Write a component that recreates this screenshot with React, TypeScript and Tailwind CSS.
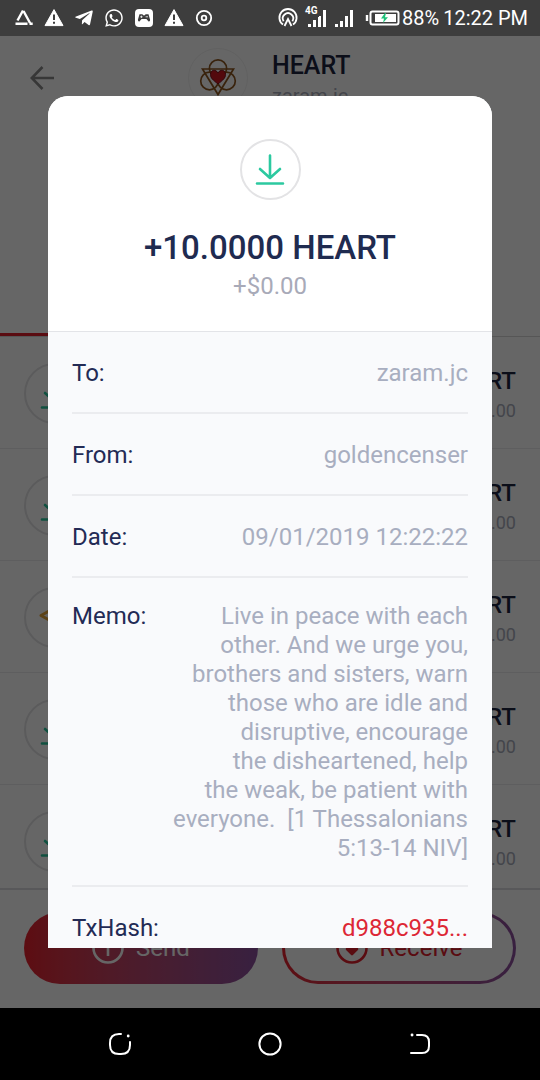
import type { ReactNode } from 'react';
import { FaTelegramPlane, FaWhatsapp } from 'react-icons/fa';

const transfers = [
  { id: 1, kind: 'in', amount: '+10.0000 HEART', usd: '+$0.00' },
  { id: 2, kind: 'in', amount: '+10.0000 HEART', usd: '+$0.00' },
  { id: 3, kind: 'swap', amount: '+10.0000 HEART', usd: '+$0.00' },
  { id: 4, kind: 'in', amount: '+10.0000 HEART', usd: '+$0.00' },
  { id: 5, kind: 'in', amount: '+10.0000 HEART', usd: '+$0.00' },
];

const memo = [
  'Live in peace with each',
  'other. And we urge you,',
  'brothers and sisters, warn',
  'those who are idle and',
  'disruptive, encourage',
  'the disheartened, help',
  'the weak, be patient with',
  'everyone.  [1 Thessalonians',
  '5:13-14 NIV]',
].join('\n');

function WarningIcon() {
  return (
    <svg viewBox="0 0 20 20" className="w-5 h-5">
      <path d="M10 1.6 19 17.6H1Z" fill="#fff" stroke="#fff" strokeLinejoin="round" />
      <path d="M10 6.5v5.5M10 13.8v2" stroke="#3d3d3d" strokeWidth="2" />
    </svg>
  );
}

function StatusBar() {
  return (
    <header className="flex h-9 shrink-0 items-center justify-between bg-[#3d3d3d] pl-[14px] pr-3 text-white">
      <div className="flex items-center gap-[10px]">
        <svg viewBox="0 0 20 20" className="w-5 h-5" fill="none" stroke="#fff" strokeWidth="2.4">
          <path d="M9 2.5 3.5 12.5M9.5 3l6.5 12M1.5 15.8h12M15.5 15.8h3.2" />
        </svg>
        <WarningIcon />
        <FaTelegramPlane className="w-5 h-5" />
        <FaWhatsapp className="w-5 h-5" />
        <svg viewBox="0 0 20 20" className="w-5 h-5">
          <rect x="1" y="1" width="18" height="18" rx="4" fill="#fff" />
          <path d="M5.5 6.2h3l.6 1h1.8l.6-1h3l1.6 5.6q0 2-1.5 1.6L12.4 11H7.6l-2.2 2.4Q4 13.8 3.9 11.8Z" fill="#3d3d3d" />
          <path d="M6.2 8.8h2.4M7.4 7.6V10M11.6 8.8H14" stroke="#fff" strokeWidth=".8" />
        </svg>
        <WarningIcon />
        <svg viewBox="0 0 20 20" className="w-5 h-5" fill="none" stroke="#fff">
          <circle cx="10" cy="10" r="7.2" strokeWidth="1.8" />
          <circle cx="10" cy="10" r="2.3" strokeWidth="1.8" />
        </svg>
      </div>
      <div className="flex items-center">
        <svg viewBox="0 0 20 20" className="w-5 h-5" fill="none" stroke="#fff" strokeWidth="1.8">
          <path d="M5 16.6A8.6 8.6 0 1 1 15 16.6" />
          <path d="M5.6 13.2A5.2 5.2 0 1 1 14.4 13.2" />
          <path d="m6.5 18 3.5-7 3.5 7" />
        </svg>
        <svg viewBox="0 0 54 24" className="ml-[6px] w-[54px] h-6" fill="#fff">
          <path d="M4 18h3v3H4zM9 14h3v7H9zM14 10h3v11h-3zM19 4h3v17h-3zM31 18h3v3h-3zM36 15h3v6h-3zM41 10h3v11h-3zM46 4h3v17h-3z" />
          <path d="M1 0h14v11H1z" fill="#3d3d3d" />
          <text x="1" y="8" className="font-bold text-[10px]">4G</text>
        </svg>
        <svg viewBox="0 0 36 20" className="ml-[7px] w-9 h-5" fill="none">
          <path d="M2 7v6" stroke="#fff" strokeWidth="2.4" />
          <rect x="5.5" y="3.5" width="28" height="13" rx="2" stroke="#fff" strokeWidth="2" />
          <path d="M10 6h21v8H10z" fill="#fff" />
          <path d="m20 5-4 5.6h3L18 15l5-5.8h-3L21 5Z" fill="#1fc27a" />
        </svg>
        <span className="ml-px text-[20px]">88%</span>
        <span className="ml-1 text-[20px]">12:22 PM</span>
      </div>
    </header>
  );
}

function TransferIcon({ kind }: { kind: string }) {
  return (
    <span className="flex w-[61px] h-[61px] shrink-0 items-center justify-center rounded-full border-2 border-[#e3e3e5] bg-white">
      {kind === 'in' ? (
        <svg viewBox="0 0 30 32" className="w-[30px] h-8" fill="none" stroke="#2cc9a0" strokeWidth="2.6" strokeLinecap="round" strokeLinejoin="round">
          <path d="M15 1.5v22M5 15l10 9 10-9M2 29.5h26" />
        </svg>
      ) : (
        <svg viewBox="0 0 32 32" className="w-8 h-8" fill="none" stroke="#e8a83c" strokeWidth="3" strokeLinejoin="round">
          <path d="m11 8.5-9 5 9 5M21 8.5l9 5-9 5" />
        </svg>
      )}
    </span>
  );
}

function TokenLogo() {
  return (
    <span className="flex w-[60px] h-[60px] items-center justify-center rounded-full border border-[#f2f2f2] bg-white">
      <svg viewBox="0 0 40 40" className="w-10 h-10" fill="none" stroke="#8f5720" strokeWidth="1.7">
        <circle cx="20" cy="10.5" r="8.6" />
        <circle cx="11.5" cy="23" r="8.8" />
        <circle cx="28.5" cy="23" r="8.8" />
        <path d="M4.500 11h31L20 36.5Z" />
        <path d="M20 26c-5-4-7.500-6-7.500-9.500 0-5 5.500-5.500 7.500-1.500 2-4 7.500-3.500 7.500 1.500 0 3.500-2.500 5.500-7.500 9.500Z" fill="#d01822" stroke="#7a1018" strokeWidth="1" />
      </svg>
    </span>
  );
}

function WalletScreen() {
  return (
    <div className="absolute inset-0 flex flex-col bg-white">
      <div className="flex h-[301px] shrink-0 flex-col justify-between border-b border-[#d6d6d8]">
        <div className="flex items-start pl-[30px] pt-3">
          <button aria-label="Back" className="mt-[18px]">
            <svg viewBox="0 0 24 24" className="w-6 h-6" fill="none" stroke="#8a8a8a" strokeWidth="2.6">
              <path d="M24 12H2M12.5 1 1.8 12l10.7 11" />
            </svg>
          </button>
          <div className="ml-[134px]">
            <TokenLogo />
          </div>
          <div className="ml-6 pt-1">
            <h1 className="text-[25px] leading-[28px] font-medium text-[#1c2340]">HEART</h1>
            <p className="mt-1 text-xl leading-6 text-[#a9adbb]">zaram.jc</p>
          </div>
        </div>
        <div className="h-[3px] w-1/2 bg-[#e0202c]" />
      </div>
      <ul className="min-h-0 flex-1 overflow-hidden">
        {transfers.map((t) => (
          <li key={t.id} className="flex h-28 items-center justify-between border-b border-[#ececee] px-6 pt-[2px]">
            <TransferIcon kind={t.kind} />
            <div className="pt-[2px] text-right">
              <div className="text-2xl leading-8 font-medium text-[#1c2340]">{t.amount}</div>
              <div className="text-lg leading-7 text-[#a9adbb]">{t.usd}</div>
            </div>
          </li>
        ))}
      </ul>
      <div className="grid h-[120px] shrink-0 grid-cols-2 gap-6 border-t-2 border-[#dddde0] px-6 pt-[22px] pb-6">
        <button className="flex items-center justify-center gap-3 rounded-full bg-linear-to-r from-[#e8202c] to-[#8c50a0] text-2xl text-white">
          <svg viewBox="0 0 32 32" className="w-8 h-8" fill="none" stroke="#fff" strokeWidth="2.6">
            <circle cx="16" cy="16" r="14.5" />
            <path d="M16 24V9M10 14l6-6 6 6" />
          </svg>
          Send
        </button>
        <button className="flex rounded-full bg-linear-to-r from-[#e8202c] to-[#8c50a0] p-[3px] text-2xl text-[#e0202c]">
          <span className="flex h-full flex-1 items-center justify-center gap-3 rounded-full bg-white">
            <svg viewBox="0 0 32 32" className="w-8 h-8" fill="none" stroke="#e0202c" strokeWidth="2.6">
              <circle cx="16" cy="16" r="14.5" />
              <path d="M16 7v10" />
              <path d="m11 17 5 5 5-5Z" fill="#e0202c" strokeLinejoin="round" />
            </svg>
            Receive
          </span>
        </button>
      </div>
    </div>
  );
}

function DetailRow({ label, children }: { label: string; children: ReactNode }) {
  return (
    <div className="flex justify-between border-b-2 border-[#ebecef] pt-[27px] pb-[25px] leading-[28px]">
      <dt className="text-[#232b55]">{label}</dt>
      <dd className="text-right text-[#a8aec0]">{children}</dd>
    </div>
  );
}

function TransferDialog() {
  return (
    <div role="dialog" aria-label="Transfer details" className="flex flex-1 flex-col overflow-hidden rounded-t-[20px] bg-[#f9fafc] text-2xl">
      <div className="flex shrink-0 flex-col items-center border-b border-[#e3e4e8] bg-white pt-[43px] pb-[31px]">
        <TransferIcon kind="in" />
        <h2 className="mt-7 text-[33px] leading-10 font-medium text-[#1f2b50]">+10.0000 HEART</h2>
        <p className="mt-1 leading-[28px] text-[#a8aab8]">+$0.00</p>
      </div>
      <dl className="min-h-0 flex-1 overflow-hidden px-6">
        <DetailRow label="To:">zaram.jc</DetailRow>
        <DetailRow label="From:">goldencenser</DetailRow>
        <DetailRow label="Date:">09/01/2019 12:22:22</DetailRow>
        <div className="flex justify-between border-b-2 border-[#ebecef] pt-6 pb-[22px] leading-[29px]">
          <dt className="text-[#232b55]">Memo:</dt>
          <dd className="whitespace-pre text-right text-[#a8aec0]">{memo}</dd>
        </div>
        <DetailRow label="TxHash:">
          <a href="#tx" className="text-[#dd2735]">d988c935...</a>
        </DetailRow>
      </dl>
    </div>
  );
}

function NavBar() {
  return (
    <nav className="flex h-[72px] shrink-0 items-center justify-center gap-[126px] bg-black">
      <button aria-label="Recent apps">
        <svg viewBox="0 0 24 24" className="w-6 h-6" fill="none" stroke="#fff" strokeWidth="2" strokeLinecap="round">
          <path d="M13 2h-2Q2 2 2 11v2q0 9 9 9h2q9 0 9-9v-3" />
          <path d="M20.2 4v.1" strokeWidth="2.8" />
        </svg>
      </button>
      <button aria-label="Home">
        <svg viewBox="0 0 24 24" className="w-6 h-6" fill="none" stroke="#fff" strokeWidth="2">
          <circle cx="12" cy="12" r="10.6" />
        </svg>
      </button>
      <button aria-label="Back">
        <svg viewBox="0 0 24 24" className="w-6 h-6" fill="none" stroke="#fff" strokeWidth="2" strokeLinecap="round">
          <path d="M9 3h5q7 0 7 7v4q0 7-7 7H3" />
          <path d="M4 3h.1" strokeWidth="2.8" />
        </svg>
      </button>
    </nav>
  );
}

export default function App() {
  return (
    <div className="flex h-screen flex-col font-[Roboto,sans-serif]">
      <StatusBar />
      <main className="relative flex-1 overflow-hidden">
        <WalletScreen />
        <div className="absolute inset-0 flex bg-black/60 px-12 py-[60px]">
          <TransferDialog />
        </div>
      </main>
      <NavBar />
    </div>
  );
}
